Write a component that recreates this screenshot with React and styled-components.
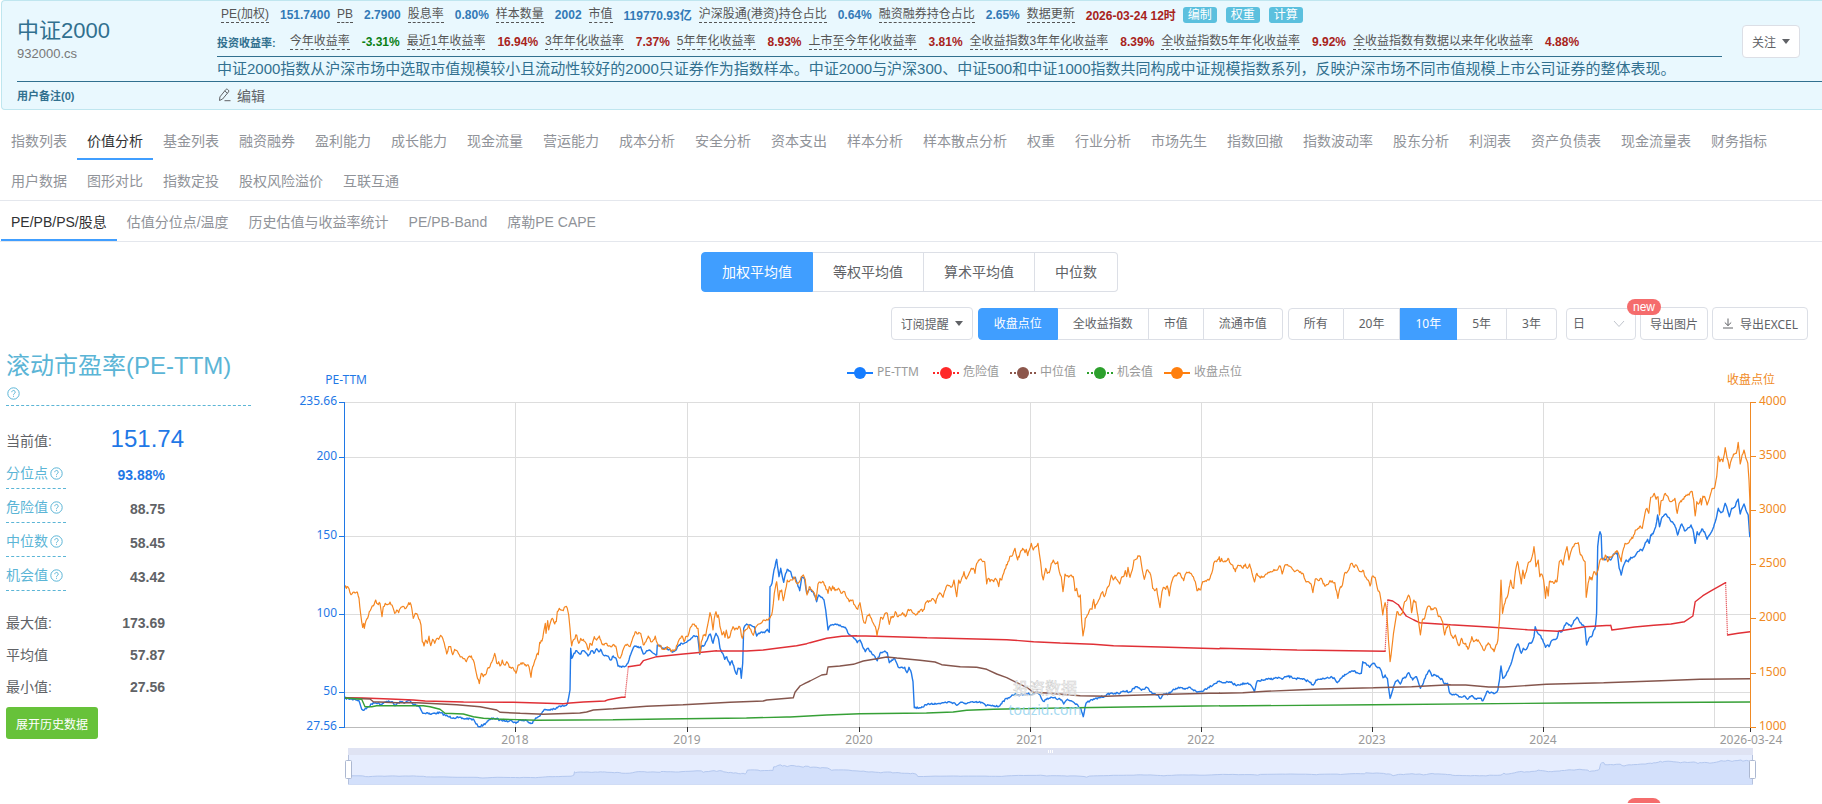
import React from "react";
import styled, { createGlobalStyle } from "styled-components";

const sans = `"Liberation Sans", "Noto Sans CJK SC", sans-serif`;
const uiSans = `"Noto Sans", "Noto Sans CJK SC", sans-serif`;

const GlobalStyle = createGlobalStyle`
  *, *::before, *::after { box-sizing: border-box; }
  body { margin: 0; background: #fff; color: #606266; font: 12px ${sans}; }
  button, select, input { font: inherit; color: inherit; }
  a { color: inherit; text-decoration: none; }
`;

/* ---------- index header ---------- */

const Header = styled.header`
  margin-left: 1px;
  padding-left: 15px;
  background: #e9f8fe;
  border: 1px solid #bfe6ef;
  border-right: 0;
  border-radius: 4px 0 0 4px;
`;

const HeaderTop = styled.div`
  display: flex;
  height: 81px;
  border-bottom: 1px solid #31708f;
`;

const HeaderName = styled.div`
  flex: 0 0 200px;
  padding-top: 17px;
  color: #777;
  font-size: 13px;
  line-height: 20px;
`;

const IndexName = styled.h1`
  margin: 0;
  font-size: 22px;
  font-weight: 400;
  line-height: 26px;
  color: #31708f;
`;

const HeaderBody = styled.div`
  flex: 1;
  min-width: 0;
`;

const Facts = styled.div`
  padding-bottom: 1px;
  border-bottom: 1px solid #31708f;
`;

const FactTitle = styled.strong`
  margin-right: 14px;
  font-size: 11px;
  color: #31708f;
`;

const FactLabel = styled.span`
  line-height: 15px;
  color: #555;
  border-bottom: 1px dashed #555;
`;

const FactLine = styled.div`
  display: flex;
  align-items: center;
  height: 27px;
  padding-left: ${(p) => (p.$indent ? "4px" : "0")};
  white-space: nowrap;
  ${FactLabel} { margin-right: ${(p) => (p.$indent ? "11px" : "12px")}; }
`;

const factColors = { blue: "#337ab7", red: "#a8231b", green: "#0a8015" };
const FactValue = styled.strong`
  margin-right: 7px;
  color: ${(p) => factColors[p.$tone]};
`;

const Tag = styled.a`
  width: 34px;
  margin-right: 9px;
  border-radius: 3px;
  background: #5bc0de;
  color: #fff;
  line-height: 16px;
  text-align: center;
`;

const Description = styled.p`
  margin: 0;
  font-size: 15px;
  line-height: 24px;
  color: #31708f;
  white-space: nowrap;
`;

const FollowArea = styled.div`
  flex: 0 0 100px;
  padding: 24px 0 0 20px;
`;

const HeaderFoot = styled.div`
  display: flex;
  align-items: center;
  height: 27px;
  padding-bottom: 2px;
`;

const NoteTitle = styled.strong`
  flex: 0 0 201px;
  font-size: 11px;
  color: #31708f;
`;

const EditButton = styled.button`
  display: flex;
  align-items: center;
  gap: 6px;
  padding: 0;
  border: 0;
  background: none;
  font-size: 14px;
  color: #606266;
`;

/* ---------- tabs ---------- */

const TabBar = styled.nav`
  display: flex;
  flex-wrap: wrap;
  margin-top: ${(p) => (p.$spaced ? "10px" : "0")};
  padding-left: 1px;
  border-bottom: 1px solid #e4e7ed;
`;

const Tab = styled.a`
  height: 40px;
  padding: 0 10px;
  font-size: 14px;
  line-height: 42px;
  white-space: nowrap;
  color: ${(p) => (p.$active ? "#303133" : "#909399")};
  border-bottom: 2px solid ${(p) => (p.$active ? "#409eff" : "transparent")};
`;

/* ---------- buttons and groups ---------- */

const PlainButton = styled.button`
  position: relative;
  display: flex;
  align-items: center;
  justify-content: center;
  gap: 6px;
  height: 33px;
  padding: 0 9px;
  background: #fff;
  border: 1px solid #dcdfe6;
  border-radius: 4px;
  white-space: nowrap;
  font-family: ${uiSans};
`;

const Caret = styled.span`
  width: 0;
  border: 4px solid transparent;
  border-top: 5px solid #606266;
  border-bottom: 0;
`;

const RadioGroup = styled.fieldset`
  display: flex;
  margin: 0;
  padding: 0;
  border: 0;
  font-family: ${uiSans};
  font-size: ${(p) => (p.$large ? "14px" : "12px")};
`;

const RadioLabel = styled.label`
  display: block;
  padding: ${(p) => (p.$large ? "0 20px" : "0 15px")};
  line-height: ${(p) => (p.$large ? "38px" : "30px")};
  border: 1px solid #dcdfe6;
  border-left-width: 0;
  white-space: nowrap;
  &:first-of-type { border-left-width: 1px; border-radius: 4px 0 0 4px; }
  &:last-of-type { border-radius: 0 4px 4px 0; }
  &:has(input:checked) { background: #409eff; border-color: #409eff; color: #fff; }
  input { position: absolute; opacity: 0; width: 0; height: 0; margin: 0; }
`;

const Averages = styled.div`
  display: flex;
  justify-content: center;
  padding: 10px 3px 0 0;
`;

const Toolbar = styled.div`
  display: flex;
  justify-content: flex-end;
  align-items: center;
  gap: 5px;
  margin-top: 15px;
  padding-right: 14px;
`;

const Exports = styled.div`
  display: flex;
  align-items: center;
  gap: 4px;
  margin-left: 4px;
`;

const SelectBox = styled.label`
  display: flex;
  align-items: center;
  width: 70px;
  height: 32px;
  padding-right: 10px;
  border: 1px solid #dcdfe6;
  border-radius: 4px;
  select {
    flex: 1;
    min-width: 0;
    padding: 0 0 0 6px;
    border: 0;
    background: none;
    appearance: none;
    font-size: 12px;
  }
`;

const badgeShape = `
  position: absolute;
  width: 34px;
  height: 16px;
  border-radius: 8px;
  background: #f56c6c;
`;

const Badge = styled.span`
  ${badgeShape}
  top: -9px;
  left: -14px;
  color: #fff;
  line-height: 16px;
  text-align: center;
  font-family: ${sans};
`;

/* ---------- main area ---------- */

const Main = styled.main`
  display: flex;
  align-items: flex-start;
  margin-top: 5px;
`;

const Side = styled.aside`
  flex: 0 0 262px;
  padding: 6px 11px 0 6px;
  font-size: 14px;
`;

const SideTitle = styled.h2`
  margin: 0 0 18px;
  border-bottom: 1px dashed #5bb5d6;
  color: #5bb5d6;
  font-size: 24px;
  font-weight: 400;
  line-height: 30px;
  span { display: flex; align-items: center; height: 24px; padding-left: 1px; }
`;

const listGaps = { none: "0", small: "4px", large: "13px" };
const StatList = styled.dl`
  margin: 0 0 ${(p) => listGaps[p.$gap]};
`;

const Stat = styled.div`
  display: flex;
  justify-content: space-between;
  width: ${(p) => (p.$wide ? "178px" : "159px")};
  height: ${(p) => (p.$tall ? "34px" : "32px")};
  line-height: ${(p) => (p.$tall ? "34px" : "32px")};
`;

const StatName = styled.dt`
  display: flex;
  align-items: center;
  gap: 2px;
  ${(p) =>
    p.$link &&
    `
    width: 60px;
    height: 31px;
    color: #5bb5d6;
    border-bottom: 1px dashed #5bb5d6;
  `}
`;

const StatValue = styled.dd`
  margin: 0;
  font-weight: ${(p) => (p.$big ? 400 : 700)};
  font-size: ${(p) => (p.$big ? "24px" : "14px")};
  color: ${(p) => (p.$blue ? "#1f78e6" : "#606266")};
  line-height: ${(p) => (p.$big ? "30px" : "inherit")};
`;

const HistoryButton = styled.button`
  display: block;
  width: 92px;
  height: 32px;
  padding: 0;
  border: 0;
  border-radius: 3px;
  background: #67c23a;
  color: #fff;
  font-size: 12px;
`;

const Chart = styled.svg`
  display: block;
  flex: 1;
  min-width: 0;
  height: auto;
  font: 12px ${uiSans};
`;

const NextSection = styled.section`
  position: relative;
  height: 13px;
  overflow: hidden;
`;

const NextBadge = styled.span`
  ${badgeShape}
  top: 8px;
  right: 161px;
`;

/* ---------- icons ---------- */

const HelpIcon = () => (
  <svg width="13" height="13" viewBox="0 0 13 13" fill="none" stroke="currentColor" aria-hidden="true">
    <circle cx="6.5" cy="6.5" r="5.7" />
    <path d="M4.8 5.2a1.7 1.7 0 1 1 2.6 1.4c-.6.4-.9.6-.9 1.2M6.5 8.8v1" />
  </svg>
);

const EditIcon = () => (
  <svg width="13" height="14" viewBox="0 0 13 14" fill="none" stroke="currentColor" aria-hidden="true">
    <path d="M1.5 12.5l.4-3.6L7.8 1.6a1.3 1.3 0 0 1 1.9-.1l.7.6a1.3 1.3 0 0 1 .1 1.8L4.6 11zM6.8 3l2.6 2.2M6.5 12.7H12.5" />
  </svg>
);

const DownloadIcon = () => (
  <svg width="12" height="11" viewBox="0 0 12 11" fill="none" stroke="currentColor" aria-hidden="true">
    <path d="M6 0.5V7.5M2.8 4.5L6 7.6L9.2 4.5M1 10h10" />
  </svg>
);

const ChevronIcon = () => (
  <svg width="12" height="8" viewBox="0 0 12 8" fill="none" stroke="#c0c4cc" aria-hidden="true">
    <path d="M1 1l5 5.5L11 1" />
  </svg>
);

/* ---------- chart data ---------- */

/* Three stretches of the time axis, each sampled on its own finer grid. */
const stretches = [
  { from: 330, step: 3 },
  { from: 760, step: 3 },
  { from: 1220, step: 2.605 },
];

const toPoints = (parts) =>
  parts.flatMap((part, i) =>
    part
      .trim()
      .split(/\s+/)
      .map((pair) => {
        const [x, y] = pair.split(",").map(Number);
        return [stretches[i].from + x / stretches[i].step, 380 + y / 3];
      })
  );

const closeData = [
  `44,622 54,621 63,644 72,636 82,636 87,655 92,703 98,742 101,730 103,745 108,722 113,714 118,695 124,685 130,678 137,660 143,672 150,670 156,710 160,680 166,670 173,674 180,666 186,675 194,700 200,690 206,698 213,682 222,680 228,685 236,668 243,674 250,715 256,700 263,706 269,720 273,735 277,785 282,798 287,780 292,790 297,768 302,797 308,778 314,790 321,775 326,778 332,766 338,775 343,790 350,822 356,800 362,800 368,824 374,808 381,812 388,824 394,830 402,836 409,845 416,830 424,828 430,840 436,865 440,885 448,911 454,880 460,890 466,885 472,868 480,860 488,840 494,820 500,850 506,845 510,858 517,840 523,855 530,845 538,862 544,865 551,868 558,880 564,856 571,852 578,848 584,855 591,855 597,860 603,892 608,860 615,840 620,824 625,824 629,787 636,783 641,755 646,730 648,760 653,722 656,750 662,725 667,715 674,732 679,725 682,695 688,685 695,690 700,692 706,680 712,685 716,705 720,745 725,798 730,780 740,765 746,790 752,775 760,778 768,790 775,810 780,790 786,796 793,770 800,780 808,768 815,790 822,795 830,790 840,798 848,795 857,798 864,830 870,835 878,812 884,798 894,795 900,800 908,775 916,755 924,762 932,760 940,795 948,785 955,768 962,785 970,780 976,768 982,790 990,798 998,808 1006,805 1014,803 1024,815 1032,813 1042,795 1050,775 1057,768 1062,785 1067,770 1074,768 1080,745 1090,733 1098,737 1104,745 1110,820 1114,785 1120,765 1127,768 1133,735 1137,715 1140,698 1144,710 1149,750 1153,715 1158,695 1162,712 1165,705 1170,740 1176,765 1181,755 1185,772 1189,750 1194,775 1201,765 1209,740 1214,750 1222,748 1229,740 1237,775 1242,752 1250,748 1256,735 1262,748 1270,766 1277,742 1284,733 1292,730 1300,720 1310,718 1320,714 1327,695 1333,640 1340,605 1346,660 1350,632 1355,630 1360,662 1366,632 1372,600 1378,605 1385,600 1394,592 1400,610 1408,606 1414,590 1420,585 1426,600`,
  `141,645 148,620 155,630 163,640 168,660 174,612 180,606 188,604 196,618 204,640 208,620 214,632 218,618 225,632 232,630 238,628 246,640 254,635 262,655 268,665 276,660 284,675 293,688 300,668 306,700 312,728 316,730 321,708 328,702 334,715 340,730 346,740 351,768 356,745 362,712 368,718 374,702 382,700 388,733 393,710 400,712 406,695 412,710 420,705 428,698 436,710 445,688 454,690 462,700 470,702 480,692 490,690 500,665 508,662 516,656 522,660 527,670 534,645 541,640 549,652 556,630 563,615 570,618 576,620 582,600 590,650 596,600 600,610 606,592 612,575 617,595 622,590 628,578 634,565 640,565 645,580 650,550 656,540 663,537 668,545 674,545 680,612 685,595 690,605 696,600 701,605 706,595 710,600 716,620 720,595 725,600 731,580 737,565 744,545 752,528 758,525 765,505 773,540 780,520 788,505 795,518 799,508 803,527 808,510 814,490 820,510 826,500 834,490 838,520 842,548 846,585 850,600 857,565 862,580 868,578 874,550 880,540 886,552 893,545 898,575 904,590 909,635 915,582 921,588 928,590 934,585 940,590 945,632 950,625 955,650 961,645 965,725 969,768 974,740 976,715 982,705 988,692 996,688 1001,658 1005,685 1010,672 1016,660 1024,640 1028,635 1033,650 1040,628 1048,615 1054,585 1060,600 1066,590 1072,600 1079,612 1086,590 1092,588 1096,572 1100,590 1104,562 1110,592 1117,570 1122,540 1128,538 1134,527 1141,530 1147,570 1153,598 1160,570 1166,575 1172,585 1178,625 1184,632 1190,625 1195,655 1200,683 1206,635 1210,622 1217,628 1222,618 1228,648 1234,610 1240,592 1248,588 1255,578 1262,585 1271,602 1278,580 1285,578 1293,580 1300,590 1306,605 1311,632 1316,625 1322,630 1328,605 1336,602 1344,598 1350,595 1355,580 1361,550 1370,545 1378,530`,
  `0,545 4,535 8,545 15,545 21,535 27,550 33,555 40,575 46,556 54,556 60,565 66,552 72,565 77,552 83,578 90,606 96,580 103,590 112,590 120,582 128,578 136,575 145,570 152,565 157,558 162,582 169,555 178,558 186,562 194,575 202,570 210,575 217,582 222,600 229,605 236,610 242,638 248,598 256,602 264,595 269,612 275,618 284,608 292,602 299,608 307,655 314,620 319,614 325,578 332,575 338,560 344,550 350,562 355,555 361,570 368,575 374,573 380,592 386,600 391,618 397,588 404,592 410,625 416,638 420,665 424,705 430,668 434,690 437,745 443,845 448,800 454,745 461,695 466,705 475,700 481,665 486,660 491,645 496,660 499,698 505,660 510,665 516,710 522,765 527,720 533,715 538,690 545,678 550,690 556,688 563,685 569,710 575,712 580,725 585,765 590,742 596,735 602,765 608,775 613,765 618,785 623,797 629,775 635,790 640,790 646,808 651,790 656,770 661,785 668,778 675,785 680,795 688,812 694,795 701,792 708,805 714,815 719,795 724,780 728,720 732,600 736,700 740,675 745,655 751,640 757,600 761,620 765,625 770,570 775,545 779,570 785,612 789,570 793,595 798,575 803,548 808,545 813,530 818,500 823,560 829,540 833,590 838,582 843,600 848,655 851,620 855,648 858,605 864,605 869,610 874,600 878,605 884,545 889,540 894,555 899,520 904,500 909,540 914,515 921,500 926,490 933,488 939,525 945,535 951,545 954,652 959,610 963,590 969,600 974,575 980,585 985,570 990,540 998,540 1004,525 1010,545 1016,530 1024,525 1030,515 1036,515 1045,545 1049,515 1055,490 1062,490 1068,480 1075,475 1082,450 1089,445 1095,438 1100,445 1107,400 1112,385 1117,400 1122,352 1127,350 1131,340 1136,358 1141,350 1145,405 1149,362 1154,360 1160,340 1167,350 1173,365 1180,360 1185,355 1191,400 1196,370 1202,365 1208,358 1214,345 1222,345 1230,335 1234,360 1238,408 1242,365 1248,370 1252,355 1254,375 1258,348 1264,355 1269,375 1275,355 1282,325 1288,325 1294,290 1298,228 1302,245 1305,238 1310,245 1316,203 1321,235 1327,265 1332,240 1338,222 1345,220 1350,187 1355,252 1360,225 1365,210 1370,235 1375,250 1378,300 1380,358 1381,455`,
];

const peData = [
  `44,954 60,957 75,958 86,961 95,988 103,990 115,980 130,968 145,968 150,975 160,970 175,963 185,965 195,977 205,968 215,965 225,968 238,961 248,972 258,975 268,978 278,1000 290,998 303,1003 312,1000 330,998 345,1005 355,1010 370,1013 385,1013 400,1016 420,1016 432,1020 438,1032 447,1040 460,1035 475,1022 490,1014 510,1020 530,1022 545,1022 558,1030 568,1020 590,1022 605,1030 615,1018 625,1010 635,1000 645,988 655,990 665,988 675,988 685,980 700,978 712,972 716,952 720,930 722,805 725,835 732,820 740,812 750,822 760,812 774,828 785,812 792,820 800,806 806,815 812,808 820,825 832,828 842,840 850,828 858,835 864,858 875,862 888,858 897,840 905,815 915,798 922,802 932,800 940,822 950,812 958,810 970,820 980,825 982,795 990,796 1000,805 1010,803 1025,815 1035,812 1045,798 1055,790 1066,788 1078,780 1090,768 1103,770 1109,823 1114,800 1125,793 1135,770 1141,762 1149,790 1158,760 1166,778 1170,805 1178,820 1184,838 1190,830 1200,855 1206,842 1214,870 1220,883 1224,865 1231,865 1234,895 1238,850 1241,745 1250,732 1262,735 1273,740 1280,768 1292,757 1304,758 1312,748 1318,757 1320,620 1326,610 1332,570 1340,538 1347,590 1352,565 1361,607 1367,580 1372,568 1382,575 1388,595 1396,592 1402,610 1409,632 1415,592 1424,598 1430,640`,
  `150,628 160,635 170,665 176,645 184,652 192,660 197,690 204,750 212,735 225,732 240,735 255,742 266,762 280,772 292,788 300,780 308,800 316,815 325,805 335,820 345,830 352,842 360,820 372,815 382,818 388,848 395,840 404,836 414,860 424,862 434,862 441,878 447,862 454,878 459,905 463,983 480,983 500,975 515,970 530,972 550,968 570,966 585,970 590,976 600,968 615,970 640,967 665,967 678,978 685,975 697,976 715,980 730,963 745,953 765,942 780,945 800,942 820,942 832,936 842,950 850,964 862,955 880,953 895,957 905,960 911,972 920,960 935,963 950,972 962,985 970,1010 978,970 990,962 1003,958 1020,952 1035,948 1050,940 1065,940 1080,940 1090,933 1112,935 1120,925 1132,920 1142,928 1152,928 1160,922 1172,935 1182,942 1192,945 1202,956 1212,942 1225,942 1240,928 1258,924 1275,928 1290,922 1310,936 1325,934 1345,922 1362,912 1378,903`,
  `0,905 15,908 25,905 40,915 55,912 70,910 82,918 90,935 97,903 115,900 140,895 155,893 162,898 175,888 195,895 215,898 230,903 243,915 250,900 265,898 280,892 297,893 306,908 315,895 330,882 345,873 358,878 368,880 372,845 380,850 390,862 400,850 408,860 418,868 425,893 430,885 436,895 443,955 450,930 457,905 463,900 470,912 476,895 485,890 492,878 502,900 512,890 522,925 530,908 537,885 545,870 552,888 560,885 570,892 580,900 585,912 593,910 597,935 605,945 615,943 625,950 635,948 645,958 655,947 668,958 678,955 685,962 695,935 705,938 716,940 724,930 728,900 732,858 737,895 745,885 752,868 760,845 765,822 772,800 777,792 785,820 790,805 798,808 805,790 812,788 818,770 821,740 827,758 833,765 840,778 848,802 853,795 857,800 862,785 870,778 878,775 882,755 890,755 895,745 902,728 908,735 915,740 922,722 930,712 938,728 945,735 951,745 955,795 961,775 968,770 974,750 978,740 981,700 984,500 987,468 990,455 993,465 995,535 1003,540 1010,530 1018,540 1025,522 1035,518 1040,565 1045,585 1052,555 1058,540 1064,545 1070,532 1080,530 1088,515 1095,508 1100,512 1108,488 1114,478 1118,490 1122,465 1128,462 1135,440 1140,405 1145,440 1150,415 1160,402 1168,412 1175,425 1182,432 1188,445 1192,465 1198,445 1203,432 1210,452 1218,445 1227,435 1232,448 1238,490 1243,455 1248,465 1255,447 1262,455 1269,478 1278,460 1286,440 1292,418 1298,385 1305,398 1310,395 1316,370 1322,390 1327,410 1333,385 1340,382 1350,357 1355,402 1360,385 1365,372 1370,390 1376,405 1380,472`,
];

const dangerData = [
  `44,953 100,954 180,957 250,960 285,963 400,966 550,967 700,971 720,969 760,966 825,963 835,959 875,952 885,952 895,860 915,857 930,855 940,842 980,830 1060,822 1100,818 1160,812 1250,813 1300,810 1340,805 1400,797 1430,791`,
  `150,788 200,775 245,769 290,767 400,770 500,773 620,776 740,779 820,785 900,789 1000,793 1060,797 1200,801 1378,806`,
  `0,805 200,810 430,814 437,660 450,663 465,675 480,700 485,708 505,720 520,728 600,734 700,741 800,749 880,754 920,746 950,740 1018,736 1021,750 1080,741 1130,736 1175,732 1210,725 1232,708 1238,665 1258,647 1280,632 1317,608 1322,765 1350,760 1381,755`,
];

const medianData = [
  `44,954 120,957 130,965 200,968 260,968 380,974 450,980 500,990 510,997 570,1000 640,1003 750,999 770,996 790,990 850,986 950,979 1060,974 1200,967 1300,963 1310,960 1390,953 1395,937 1410,918 1425,910`,
  `150,903 185,885 200,883 204,861 240,858 280,853 310,843 350,836 380,831 410,834 480,841 525,846 545,854 600,860 650,862 680,868 710,882 740,893 775,910 800,922 820,937 860,939 960,947 1040,949 1120,946 1230,943 1378,939`,
  `0,940 60,938 120,934 200,930 260,927 400,923 500,920 600,914 640,915 700,921 740,921 850,913 1000,908 1150,902 1250,898 1381,896`,
];

const chanceData = [
  `44,954 95,958 105,980 125,980 140,977 200,977 280,977 300,980 330,988 345,1000 400,1002 430,1010 460,1015 500,1017 620,1021 850,1019 1000,1017 1250,1014 1370,1011`,
  `90,1011 200,1005 300,1001 500,999 580,996 620,991 700,988 900,984 1100,981 1378,977`,
  `0,978 400,974 900,969 1381,966`,
];

const withDailyNoise = (points, amount) => {
  let seed = 7;
  const random = () => {
    seed = (seed * 16807) % 2147483647;
    return seed / 2147483647 - 0.5;
  };
  return points.flatMap(([x, y], i) => {
    const next = points[i + 1];
    if (!next) return [[x, y]];
    const count = Math.max(1, Math.round((next[0] - x) / 0.9));
    return Array.from({ length: count }, (_, k) => [
      x + ((next[0] - x) * k) / count,
      y + ((next[1] - y) * k) / count + (k ? random() * amount : 0),
    ]);
  });
};

const toPath = (points) => "M" + points.map(([x, y]) => `${x.toFixed(1)} ${y.toFixed(1)}`).join("L");

/* Jumps of a threshold line are drawn dotted, the rest solid. */
const splitJumps = (points) => {
  let solid = "";
  let dotted = "";
  points.slice(1).forEach((point, i) => {
    const piece = toPath([points[i], point]);
    if (Math.abs(point[1] - points[i][1]) > 20) dotted += piece;
    else solid += piece;
  });
  return { solid, dotted };
};

const pe = toPoints(peData);
const pePath = toPath(withDailyNoise(pe, 2));
const closePath = toPath(withDailyNoise(toPoints(closeData), 3));
const overview = pe.map(([x, y]) => [x + 4 - (x - 344) / 1080, 778 - (727 - y) * 0.079]);

const legendColors = { pe: "#167dff", danger: "#ff2828", median: "#8c564b", chance: "#2ca02c", close: "#ff7f0e" };
const lineColors = { pe: "#2279e8", danger: "#e03036", median: "#85564d", chance: "#36a036", close: "#f58620" };

const thresholdSeries = [
  ["danger", splitJumps(toPoints(dangerData))],
  ["median", splitJumps(toPoints(medianData))],
  ["chance", splitJumps(toPoints(chanceData))],
];

const legend = [
  ["PE-TTM", 847, "pe"],
  ["危险值", 933, "danger"],
  ["中位值", 1010, "median"],
  ["机会值", 1087, "chance"],
  ["收盘点位", 1164, "close"],
];

const years = [
  [515, "2018"],
  [687, "2019"],
  [859, "2020"],
  [1030, "2021"],
  [1201, "2022"],
  [1372, "2023"],
  [1543, "2024"],
  [1714, null],
];

const leftTicks = [
  [402, "235.66"],
  [457, "200"],
  [536, "150"],
  [614, "100"],
  [692, "50"],
  [727, "27.56"],
];

const rightTicks = [
  [402, "4000"],
  [456, "3500"],
  [510, "3000"],
  [564, "2500"],
  [618, "2000"],
  [673, "1500"],
  [727, "1000"],
];

const PeChart = () => (
  <Chart viewBox="262 345 1560 445" role="img" aria-label="PE-TTM">
    {legend.map(([name, x, key]) => (
      <g key={key}>
        <path
          d={`M${x} 373h26`}
          stroke={legendColors[key]}
          strokeWidth="2"
          strokeDasharray={key === "pe" || key === "close" ? undefined : "2 2"}
        />
        <circle cx={x + 13} cy="373" r="6" fill={legendColors[key]} />
        <text x={x + 30} y="376" fill="#999">{name}</text>
      </g>
    ))}

    <g stroke="#ddd">
      {leftTicks.slice(0, -1).map(([y]) => (
        <path key={y} d={`M344 ${y}.5H1750`} />
      ))}
      {years.map(([x]) => (
        <path key={x} d={`M${x}.5 402V727`} />
      ))}
      <path d="M344 727.5H1750" stroke="#bbb" />
    </g>

    <g fill="none" strokeWidth="1.2" strokeLinejoin="round">
      <path d={pePath} stroke={lineColors.pe} strokeWidth="1.4" />
      {thresholdSeries.map(([key, { solid, dotted }]) => (
        <g key={key} stroke={lineColors[key]}>
          <path d={solid} strokeWidth="1.4" strokeLinecap="round" />
          {dotted && <path d={dotted} strokeDasharray="1 1" />}
        </g>
      ))}
      <path d={closePath} stroke={lineColors.close} />
    </g>

    <g textAnchor="middle">
      <text x="1045" y="694" fontSize="16" fill="#fff" fillOpacity="0.7" stroke="#ccc" strokeWidth="0.5">投资数据</text>
      <text x="1045" y="715" fontSize="14" fill="#8fd0ee" fillOpacity="0.8">touzid.com</text>
    </g>

    <g fill="#1f78e6" textAnchor="end">
      <path d="M344.5 402V728" stroke="#1f78e6" strokeWidth="1" />
      {leftTicks.map(([y, label]) => (
        <g key={label}>
          <path d={`M339 ${y}.5h5`} stroke="#1f78e6" />
          <text x="337" y={y + 3}>{label}</text>
        </g>
      ))}
      <text x="367" y="384">PE-TTM</text>
    </g>

    <g fill="#f08a24">
      <path d="M1750.5 402V728" stroke="#f08a24" />
      {rightTicks.map(([y, label]) => (
        <g key={label}>
          <path d={`M1751 ${y}.5h5`} stroke="#f08a24" />
          <text x="1759" y={y + 3}>{label}</text>
        </g>
      ))}
      <text x="1751" y="384" textAnchor="middle">收盘点位</text>
    </g>

    <g fill="#999" textAnchor="middle">
      {years.filter(([, label]) => label).map(([x, label]) => (
        <g key={label}>
          <path d={`M${x}.5 727v5`} stroke="#333" />
          <text x={x} y="744">{label}</text>
        </g>
      ))}
      <path d="M1750.5 728v4" stroke="#333" />
      <text x="1751" y="744">2026-03-24</text>
    </g>

    <g>
      <path d="M348 755H1753V785H348Z" fill="#e6edfe" />
      <path d={`${toPath(overview)}V785H348Z`} fill="#d3e0fb" />
      <path d={toPath(overview)} fill="none" stroke="#b4c8ef" />
      <path d="M348 748H1753V755H348Z" fill="#dfe3f3" />
      <path d="M348.5 755V785M1752.5 755V785" stroke="#b6c2dd" />
      <path d="M348 784.5H1753" stroke="#d0dcf5" />
      <path d="M1048.5 750v3M1050.5 750v3M1052.5 750v3" stroke="#fff" />
      <rect x="345.5" y="760.5" width="6" height="18" rx="1" fill="#fff" stroke="#acb8d1" />
      <rect x="1749.5" y="760.5" width="6" height="18" rx="1" fill="#fff" stroke="#acb8d1" />
    </g>
  </Chart>
);

/* ---------- page content ---------- */

const facts = [
  ["PE(加权)", "151.7400", "blue"],
  ["PB", "2.7900", "blue"],
  ["股息率", "0.80%", "blue"],
  ["样本数量", "2002", "blue"],
  ["市值", "119770.93亿", "blue"],
  ["沪深股通(港资)持仓占比", "0.64%", "blue"],
  ["融资融券持仓占比", "2.65%", "blue"],
  ["数据更新", "2026-03-24 12时", "red"],
];

const returns = [
  ["今年收益率", "-3.31%", "green"],
  ["最近1年收益率", "16.94%", "red"],
  ["3年年化收益率", "7.37%", "red"],
  ["5年年化收益率", "8.93%", "red"],
  ["上市至今年化收益率", "3.81%", "red"],
  ["全收益指数3年年化收益率", "8.39%", "red"],
  ["全收益指数5年年化收益率", "9.92%", "red"],
  ["全收益指数有数据以来年化收益率", "4.88%", "red"],
];

const tabs =
  "指数列表 价值分析 基金列表 融资融券 盈利能力 成长能力 现金流量 营运能力 成本分析 安全分析 资本支出 样本分析 样本散点分析 权重 行业分析 市场先生 指数回撤 指数波动率 股东分析 利润表 资产负债表 现金流量表 财务指标 用户数据 图形对比 指数定投 股权风险溢价 互联互通".split(" ");

const subTabs = ["PE/PB/PS/股息", "估值分位点/温度", "历史估值与收益率统计", "PE/PB-Band", "席勒PE CAPE"];

const thresholds = [
  ["分位点", "93.88%"],
  ["危险值", "88.75"],
  ["中位数", "58.45"],
  ["机会值", "43.42"],
];

const extremes = [
  ["最大值:", "173.69"],
  ["平均值", "57.87"],
  ["最小值:", "27.56"],
];

const FactItems = ({ items }) =>
  items.map(([label, value, tone]) => (
    <React.Fragment key={label}>
      <FactLabel>{label}</FactLabel>
      <FactValue $tone={tone}>{value}</FactValue>
    </React.Fragment>
  ));

const Radios = ({ name, options, selected, large }) => (
  <RadioGroup $large={large}>
    {options.map((option) => (
      <RadioLabel key={option} $large={large}>
        <input type="radio" name={name} defaultChecked={option === selected} />
        {option}
      </RadioLabel>
    ))}
  </RadioGroup>
);

export default function App() {
  return (
    <>
      <GlobalStyle />
      <Header>
        <HeaderTop>
          <HeaderName>
            <IndexName>中证2000</IndexName>
            932000.cs
          </HeaderName>
          <HeaderBody>
            <Facts>
              <FactLine $indent>
                <FactItems items={facts} />
                <Tag href="#method">编制</Tag>
                <Tag href="#weight">权重</Tag>
                <Tag href="#formula">计算</Tag>
              </FactLine>
              <FactLine>
                <FactTitle>投资收益率:</FactTitle>
                <FactItems items={returns} />
              </FactLine>
            </Facts>
            <Description>
              中证2000指数从沪深市场中选取市值规模较小且流动性较好的2000只证券作为指数样本。中证2000与沪深300、中证500和中证1000指数共同构成中证规模指数系列，反映沪深市场不同市值规模上市公司证券的整体表现。
            </Description>
          </HeaderBody>
          <FollowArea>
            <PlainButton>关注<Caret /></PlainButton>
          </FollowArea>
        </HeaderTop>
        <HeaderFoot>
          <NoteTitle>用户备注(0)</NoteTitle>
          <EditButton><EditIcon />编辑</EditButton>
        </HeaderFoot>
      </Header>

      <TabBar $spaced>
        {tabs.map((tab) => (
          <Tab key={tab} href="#tab" $active={tab === "价值分析"}>{tab}</Tab>
        ))}
      </TabBar>
      <TabBar>
        {subTabs.map((tab, i) => (
          <Tab key={tab} href="#subtab" $active={i === 0}>{tab}</Tab>
        ))}
      </TabBar>

      <Averages>
        <Radios large name="average" options={["加权平均值", "等权平均值", "算术平均值", "中位数"]} selected="加权平均值" />
      </Averages>

      <Toolbar>
        <PlainButton>订阅提醒<Caret /></PlainButton>
        <Radios name="line" options={["收盘点位", "全收益指数", "市值", "流通市值"]} selected="收盘点位" />
        <Radios name="range" options={["所有", "20年", "10年", "5年", "3年"]} selected="10年" />
        <Exports>
          <SelectBox>
            <select aria-label="周期" defaultValue="日">
              <option>日</option>
            </select>
            <ChevronIcon />
          </SelectBox>
          <PlainButton>导出图片<Badge>new</Badge></PlainButton>
          <PlainButton><DownloadIcon />导出EXCEL</PlainButton>
        </Exports>
      </Toolbar>

      <Main>
        <Side>
          <SideTitle>
            滚动市盈率(PE-TTM)
            <span><HelpIcon /></span>
          </SideTitle>
          <StatList $gap="none">
            <Stat $tall $wide>
              <StatName>当前值:</StatName>
              <StatValue $big $blue>151.74</StatValue>
            </Stat>
          </StatList>
          <StatList $gap="large">
            {thresholds.map(([name, value], i) => (
              <Stat key={name} $tall>
                <StatName $link>{name}<HelpIcon /></StatName>
                <StatValue $blue={i === 0}>{value}</StatValue>
              </Stat>
            ))}
          </StatList>
          <StatList $gap="small">
            {extremes.map(([name, value]) => (
              <Stat key={name}>
                <StatName>{name}</StatName>
                <StatValue>{value}</StatValue>
              </Stat>
            ))}
          </StatList>
          <HistoryButton>展开历史数据</HistoryButton>
        </Side>
        <PeChart />
      </Main>
      <NextSection>
        <NextBadge />
      </NextSection>
    </>
  );
}
